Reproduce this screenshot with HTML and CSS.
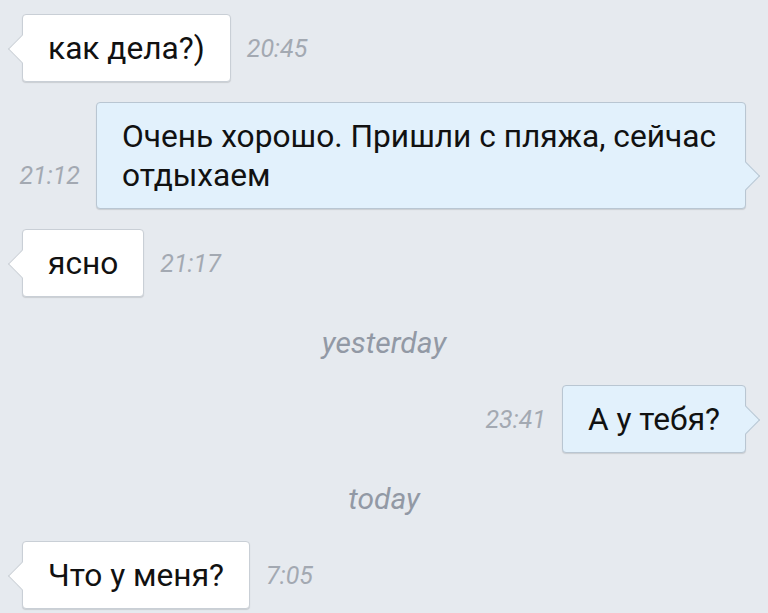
FILE: index.html
```html
<!DOCTYPE html>
<html lang="ru">
<head>
    <meta charset="utf-8">
    <meta name="viewport" content="width=device-width, initial-scale=1.0">
    <title>Чат</title>

    <link rel="stylesheet" href="styles.css">
</head>

<body>
    <main class="chat">
        <div class="row in">
            <div class="bubble">как дела?)</div>
            <span class="time">20:45</span>
        </div>

        <div class="row out">
            <span class="time">21:12</span>
            <div class="bubble">Очень хорошо. Пришли с пляжа, сейчас отдыхаем</div>
        </div>

        <div class="row in">
            <div class="bubble">ясно</div>
            <span class="time">21:17</span>
        </div>

        <div class="day">yesterday</div>

        <div class="row out">
            <span class="time">23:41</span>
            <div class="bubble">А у тебя?</div>
        </div>

        <div class="day">today</div>

        <div class="row in">
            <div class="bubble">Что у меня?</div>
            <span class="time">7:05</span>
        </div>
    </main>
</body>
</html>
```

FILE: styles.css
```css
body{
    margin: 0;
    background-color: #e6eaef;
    font-family: Roboto, "Noto Sans", sans-serif;
}

.chat{
    display: flex;
    flex-direction: column;
    gap: 20px;
    padding: 14px 22px;
}

.row{
    display: flex;
    align-items: flex-end;
    gap: 16px;
}

.row.out{
    justify-content: flex-end;
}

.bubble{
    position: relative;
    flex-shrink: 0;
    max-width: 598px;
    padding: 13.5px 25px;
    background-color: #fff;
    border: 1px solid #c9cfd6;
    border-radius: 4px;
    box-shadow: 0 1px 1px rgba(0, 0, 0, 0.12);
    color: #111;
    font-size: 31.7px;
    line-height: 39px;
}

/* хвостик пузыря */
.bubble::before{
    content: "";
    position: absolute;
    bottom: 22px;
    width: 19px;
    height: 19px;
    background-color: inherit;
    transform: rotate(45deg);
}

.in .bubble::before{
    left: -11px;
    border-left: 1px solid #c9cfd6;
    border-bottom: 1px solid #c9cfd6;
}

.out .bubble{
    background-color: #e2f1fc;
    border-color: #b9c6d2;
}

.out .bubble::before{
    right: -11px;
    border-right: 1px solid #b9c6d2;
    border-top: 1px solid #b9c6d2;
}

.time{
    padding-bottom: 14px;
    color: #a3a9b2;
    font-size: 25px;
    font-style: italic;
    line-height: 39px;
}

.day{
    padding-top: 4px;
    color: #9299a5;
    font-size: 30px;
    font-style: italic;
    line-height: 44px;
    text-align: center;
}
```
